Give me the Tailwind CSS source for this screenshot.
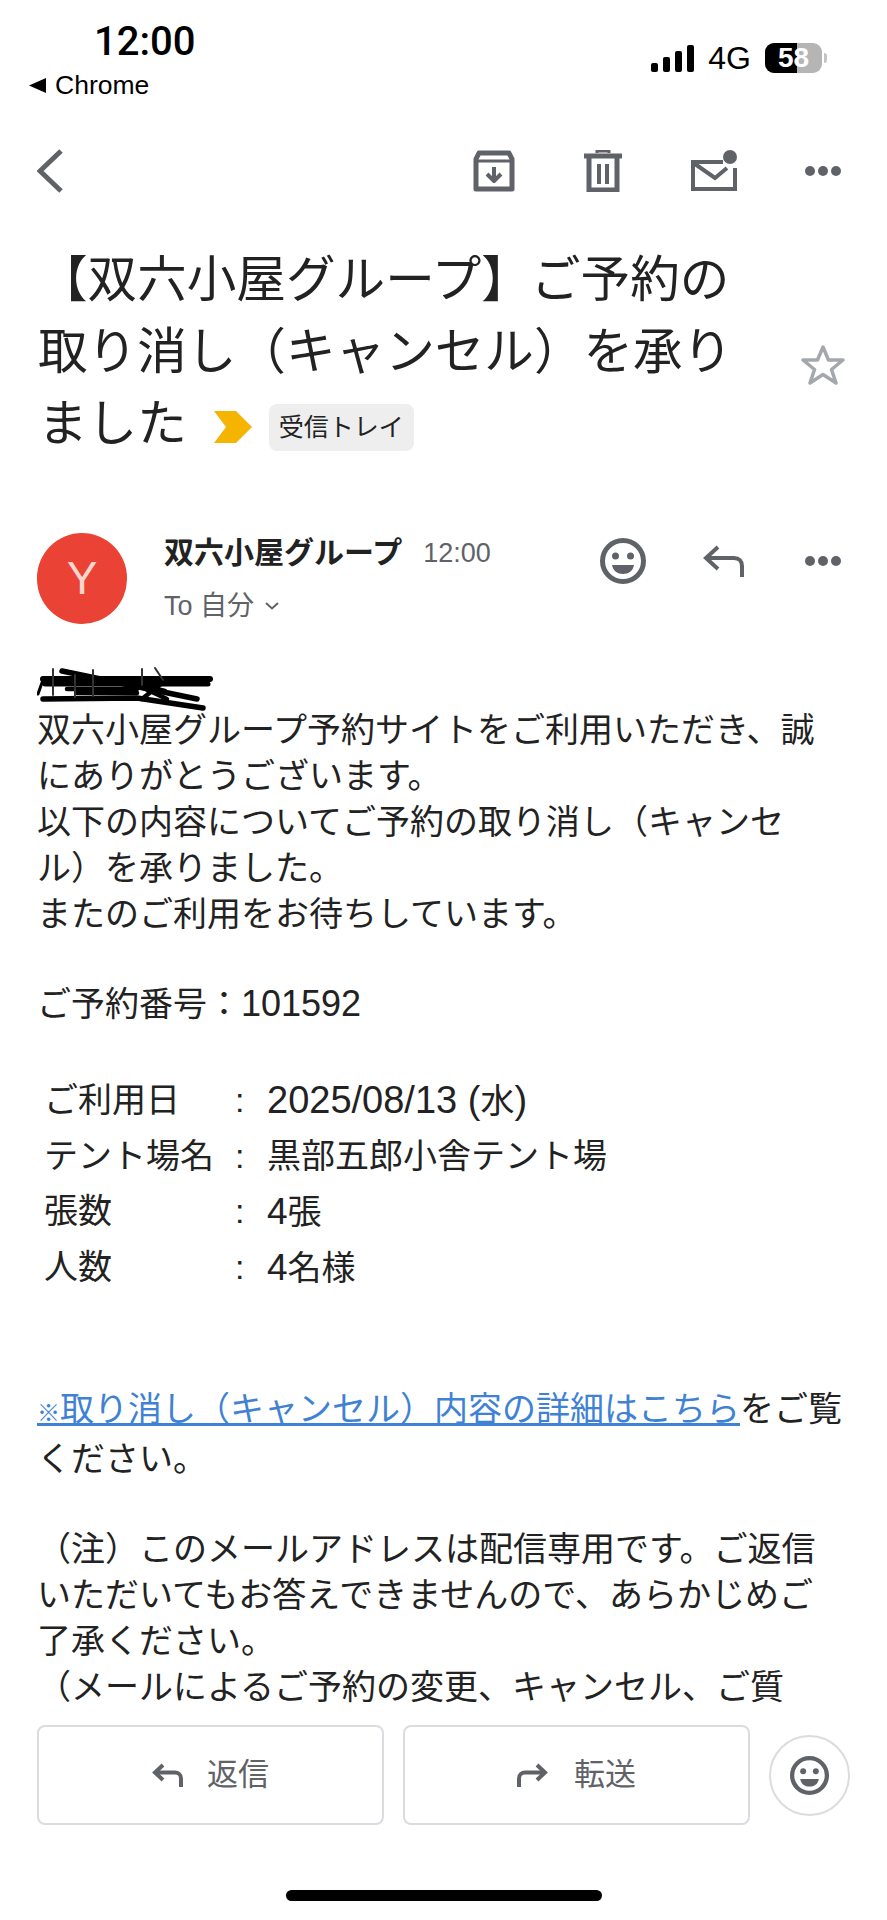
<!DOCTYPE html>
<html lang="ja">
<head>
  <meta charset="UTF-8" />
  <meta name="viewport" content="width=device-width, initial-scale=1.0" />
  <title>Gmail</title>
  <script src="https://cdn.jsdelivr.net/npm/@tailwindcss/browser@4"></script>
</head>
<body class="bg-white font-['Liberation_Sans','Noto_Sans_CJK_JP',sans-serif] text-[#222]">
  <div class="w-[887px] h-[1920px] flex flex-col overflow-hidden">

    <!-- Status bar -->
    <div class="h-[134px] shrink-0 flex justify-between">
      <div class="pl-[29px] pt-[20px]">
        <div class="pl-[65px] font-['Roboto',sans-serif] text-[40px] leading-[44px] font-medium text-black">12:00</div>
        <div class="mt-[6px] flex items-center gap-[9px] text-[26.500px] leading-[30px] text-black">
          <svg class="w-[17px] h-[15px]" viewBox="0 0 17 15"><path d="M0 7.500 17 0v15z" fill="#000"/></svg>
          Chrome
        </div>
      </div>
      <div class="pt-[43px] pr-[60px] flex items-start gap-[14px]">
        <svg class="w-[43px] h-[30px]" viewBox="0 0 43 30" fill="#000">
          <rect x="0" y="20" width="7" height="9" rx="2"/><rect x="12" y="14" width="7" height="15" rx="2"/><rect x="24" y="8" width="7" height="21" rx="2"/><rect x="36" y="2" width="7" height="27" rx="2"/>
        </svg>
        <span class="text-[32px] leading-[30px] text-black">4G</span>
        <div class="relative flex items-center">
          <div class="relative w-[57px] h-[30px] rounded-[9px] overflow-hidden bg-[#b5b5b5] flex items-center justify-center text-white font-bold text-[28px]">
            <div class="absolute inset-y-0 left-0 w-[32px] bg-black"></div>
            <span class="relative">58</span>
          </div>
          <div class="ml-[2px] w-[3px] h-[10px] rounded-r-full bg-[#c4c4c4]"></div>
        </div>
      </div>
    </div>

    <!-- Toolbar -->
    <div class="h-[74px] shrink-0 flex items-center justify-between pl-[37px] pr-[46px]">
      <svg class="w-[26px] h-[44px]" viewBox="0 0 26 44" fill="none" stroke="#5f6368" stroke-width="5"><path d="M24 2 3 22l21 20"/></svg>
      <div class="flex items-center">
        <svg class="w-[42px] h-[42px]" viewBox="0 0 42 42" fill="none" stroke="#5f6368" stroke-width="5" stroke-linejoin="round">
          <path d="M6 3h30l3 6v30H3V9z"/><path d="M3 11h36" stroke-width="3"/>
          <path d="M21 17v13M14 24l7 7 7-7" stroke-width="4"/>
        </svg>
        <svg class="ml-[69px] w-[38px] h-[42px]" viewBox="0 0 38 42" fill="none" stroke="#5f6368" stroke-width="5">
          <path d="M0 6h38" stroke-width="5"/><path d="M13 3V1h12v2" stroke-width="3"/><path d="M5 8v32h28V8"/><path d="M15 14v20M23 14v20" stroke-width="4"/>
        </svg>
        <svg class="ml-[69px] w-[46px] h-[42px]" viewBox="0 0 46 42" fill="none" stroke="#5f6368" stroke-width="4">
          <path d="M32 12H2v27h42V18"/><path d="M4 14l20 14 12-10"/>
          <circle cx="39" cy="7" r="7" fill="#5f6368" stroke="none"/>
        </svg>
        <svg class="ml-[68px] w-[36px] h-[10px]" viewBox="0 0 36 10" fill="#5f6368"><circle cx="5" cy="5" r="5"/><circle cx="18" cy="5" r="5"/><circle cx="31" cy="5" r="5"/></svg>
      </div>
    </div>

    <!-- Subject -->
    <div class="mt-[36px] h-[226px] shrink-0 pl-[38px] pr-[41px] flex justify-between">
      <h1 class="text-[49.600px] leading-[72px] font-normal">
        <span class="block">【双六小屋グループ】ご予約の</span>
        <span class="block">取り消し（キャンセル）を承り</span>
        <span class="flex items-center">ました
          <svg class="ml-[27px] mt-[6px] w-[38px] h-[32px]" viewBox="0 0 38 32" fill="#f4b400"><path d="M0 0h22l16 16-16 16H0l12-16z"/></svg>
          <span class="ml-[17px] mt-[6px] w-[145px] h-[47px] rounded-[8px] bg-[#eeeeee] flex items-center justify-center text-[25px] leading-none text-[#222]">受信トレイ</span>
        </span>
      </h1>
      <svg class="mt-[99px] w-[46px] h-[42px]" viewBox="0 0 46 42" fill="none" stroke="#a4a8ad" stroke-width="3.500" stroke-linejoin="round"><path d="M23 4l5.500 13H43l-11.500 9.500L36 40 23 31.500 10 40l4.500-13.500L3 17h14.500z"/></svg>
    </div>

    <!-- Sender -->
    <div class="mt-[63px] h-[91px] shrink-0 pl-[37px] pr-[46px] flex items-start">
      <div class="w-[90px] h-[91px] rounded-full bg-[#ea4335] flex items-center justify-center text-[#fbd5d0] text-[46px]">Y</div>
      <div class="ml-[37px] flex-1">
        <div class="flex items-center h-[40px]">
          <span class="text-[30px] font-bold leading-none">双六小屋グループ</span>
          <span class="ml-[21px] text-[27px] leading-none text-[#5f6368]">12:00</span>
        </div>
        <div class="mt-[16px] flex items-center text-[27px] leading-[34px] text-[#5f6368]">
          To 自分
          <svg class="ml-[11px] w-[14px] h-[8px]" viewBox="0 0 14 8" fill="none" stroke="#5f6368" stroke-width="2"><path d="M1 1l6 5.500L13 1"/></svg>
        </div>
      </div>
      <div class="flex items-center h-[56px]">
        <svg class="w-[46px] h-[46px]" viewBox="0 0 46 46">
          <circle cx="23" cy="23" r="20.500" fill="none" stroke="#5f6368" stroke-width="5"/>
          <circle cx="15.500" cy="18" r="3.500" fill="#5f6368"/><circle cx="30.500" cy="18" r="3.500" fill="#5f6368"/>
          <path d="M12 27h22c-1 6-5.500 9-11 9s-10-3-11-9z" fill="#5f6368"/>
        </svg>
        <svg class="ml-[57px] w-[41px] h-[32px]" viewBox="0 0 41 32" fill="none" stroke="#5f6368" stroke-width="4"><path d="M15 2 3 13l12 11"/><path d="M3 13h28c5 0 8 3 8 8v11"/></svg>
        <svg class="ml-[61px] w-[36px] h-[10px]" viewBox="0 0 36 10" fill="#5f6368"><circle cx="5" cy="5" r="5"/><circle cx="18" cy="5" r="5"/><circle cx="31" cy="5" r="5"/></svg>
      </div>
    </div>

    <!-- Body -->
    <div class="mt-[43px] flex-1 min-h-0 overflow-hidden pl-[37px] text-[34px] leading-[46px] text-[#222] whitespace-nowrap">
      <!-- blacked out name -->
      <div class="h-[40px]">
        <svg class="w-[180px] h-[46px]" viewBox="0 0 180 46" fill="none" stroke="#000" stroke-linecap="round">
          <path d="M6 12h167" stroke-width="6"/>
          <path d="M8 17h163" stroke-width="5"/>
          <path d="M25 4 160 32" stroke-width="5.500"/>
          <path d="M6 32l94-1 66 10" stroke-width="5.500"/>
          <path d="M1 27l5-14" stroke-width="3"/>
          <path d="M100 18l30 14M125 16l-20 16M112 20l16 4M30 22h70M40 26h60" stroke-width="4.500"/>
          <path d="M16 2v26M56 3v26M38 8v22M105 2v16M118 1l8 12" stroke="#333" stroke-width="2"/>
        </svg>
      </div>
      <div>双六小屋グループ予約サイトをご利用いただき、誠</div>
      <div>にありがとうございます。</div>
      <div>以下の内容についてご予約の取り消し（キャンセ</div>
      <div>ル）を承りました。</div>
      <div>またのご利用をお待ちしています。</div>
      <div class="h-[44px]"></div>
      <div>ご予約番号：<span class="text-[36px]">101592</span></div>

      <div class="mt-[46px] pl-[7px] grid grid-cols-[191px_32px_1fr] leading-[55px]">
        <div>ご利用日</div><div>:</div><div><span class="text-[38px]">2025/08/13 (</span>水<span class="text-[38px]">)</span></div>
        <div>テント場名</div><div>:</div><div>黒部五郎小舎テント場</div>
        <div>張数</div><div>:</div><div><span class="text-[37px]">4</span>張</div>
        <div>人数</div><div>:</div><div><span class="text-[37px]">4</span>名様</div>
      </div>

      <div class="h-[90px]"></div>
      <div><a class="text-[#3f82d4] underline"><span class="text-[23px]">※</span>取り消し（キャンセル）内容の詳細はこちら</a>をご覧</div>
      <div>ください。</div>
      <div class="h-[44px]"></div>
      <div>（注）このメールアドレスは配信専用です。ご返信</div>
      <div>いただいてもお答えできませんので、あらかじめご</div>
      <div>了承ください。</div>
      <div>（メールによるご予約の変更、キャンセル、ご質</div>
    </div>

    <!-- Reply / forward -->
    <div class="shrink-0 h-[208px] pl-[37px] pt-[13px] bg-white">
      <div class="flex items-center gap-[19px]">
        <button class="w-[347px] h-[100px] rounded-[8px] border-2 border-[#dadce0] flex items-center justify-center gap-[24px] text-[31px] text-[#5f6368]">
          <svg class="w-[31px] h-[24px]" viewBox="0 0 31 24" fill="none" stroke="#5f6368" stroke-width="4"><path d="M11 2 3 9.500 11 17"/><path d="M3 9.500h20c3 0 6 2 6 6V24"/></svg>
          返信
        </button>
        <button class="w-[347px] h-[100px] rounded-[8px] border-2 border-[#dadce0] flex items-center justify-center gap-[26px] text-[31px] text-[#5f6368]">
          <svg class="w-[31px] h-[24px]" viewBox="0 0 31 24" fill="none" stroke="#5f6368" stroke-width="4"><path d="M20 2l8 7.500L20 17"/><path d="M28 9.500H8c-3 0-6 2-6 6V24"/></svg>
          転送
        </button>
        <div class="w-[81px] h-[81px] rounded-full border-2 border-[#dadce0] flex items-center justify-center">
          <svg class="w-[39px] h-[39px]" viewBox="0 0 46 46">
            <circle cx="23" cy="23" r="20.500" fill="none" stroke="#5f6368" stroke-width="5"/>
            <circle cx="15.500" cy="18" r="3.500" fill="#5f6368"/><circle cx="30.500" cy="18" r="3.500" fill="#5f6368"/>
            <path d="M12 27h22c-1 6-5.500 9-11 9s-10-3-11-9z" fill="#5f6368"/>
          </svg>
        </div>
      </div>
      <div class="mt-[65px] ml-[249px] w-[316px] h-[11px] rounded-full bg-black"></div>
    </div>

  </div>
</body>
</html>
